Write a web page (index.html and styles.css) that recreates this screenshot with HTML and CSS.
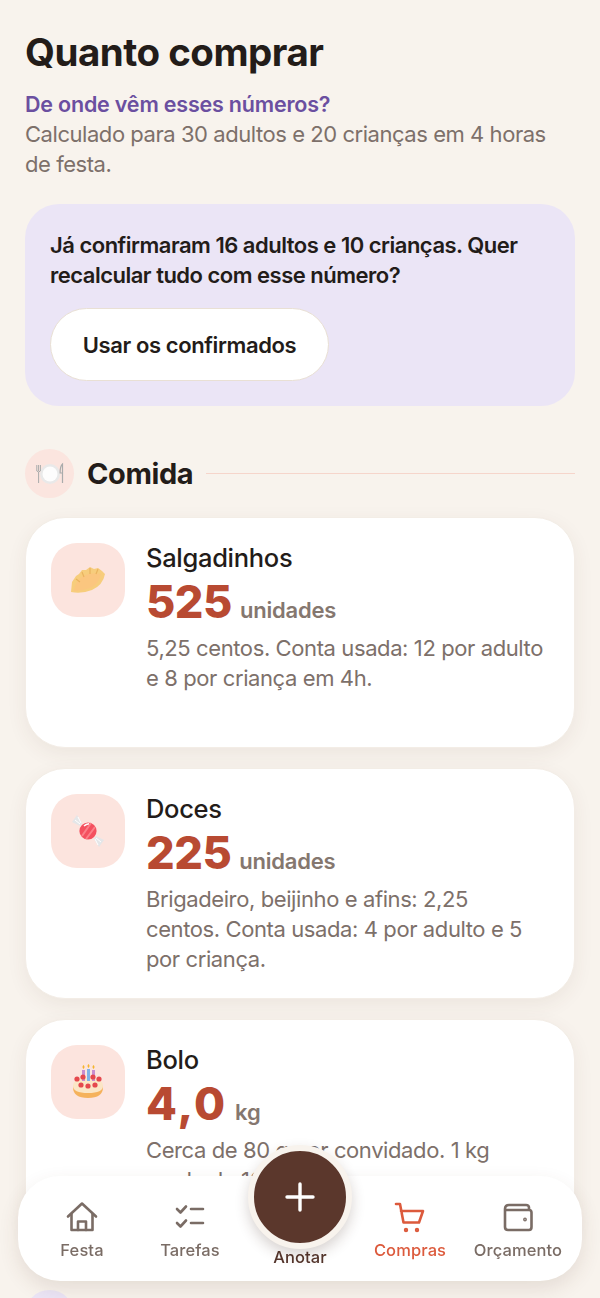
FILE: index.html
```html
<!DOCTYPE html>
<html lang="pt-BR">
<head>
  <meta charset="UTF-8">
  <meta name="viewport" content="width=device-width, initial-scale=1.0">
  <title>Quanto comprar</title>
  <link rel="stylesheet" href="styles.css">
</head>
<body>
  <main class="page">
    <h1>Quanto comprar</h1>
    <a class="source-link" href="#">De onde vêm esses números?</a>
    <p class="intro">Calculado para 30 adultos e 20 crianças em 4 horas<br>de festa.</p>

    <section class="notice">
      <p>Já confirmaram 16 adultos e 10 crianças. Quer recalcular tudo com esse número?</p>
      <button class="notice-btn">Usar os confirmados</button>
    </section>

    <div class="section-head">
      <span class="section-icon">
        <svg width="30" height="30" viewBox="0 0 30 30">
          <circle cx="15" cy="15" r="10" fill="#e9e9e9"/>
          <circle cx="15" cy="15" r="7.500" fill="#fdfdfd"/>
          <path d="M1.800 6v6M3.600 6v6M5.400 6v6M1.800 12q1.800 2 3.600 0M3.600 13v11" stroke="#a9abab" stroke-width="1" fill="none"/>
          <path d="M27.500 24V5q-2.400 2-2.400 9h2.400" stroke="#a9abab" stroke-width="1.200" fill="none"/>
        </svg>
      </span>
      <h2>Comida</h2>
      <span class="section-line"></span>
    </div>

    <article class="card card-tall">
      <span class="card-icon">
        <svg width="36" height="30" viewBox="0 0 36 30">
          <path d="M1 27 2 17 6 11 9 9 12 5 16 5 20 2 24 4 28 3 32 6 35 9Q33 20 22 25 12 29 1 27Z" fill="#f7cd7c"/>
          <path d="M4 26Q5 16 13 11 22 7 31 9 29 19 20 23 12 26 4 26Z" fill="#fbc67f"/>
          <path d="M6 14 10 17M12 7 14 12M20 3 20 9M28 4 26 9" stroke="#eab35f" stroke-width="1.200"/>
        </svg>
      </span>
      <div class="card-body">
        <h3>Salgadinhos</h3>
        <div class="amount"><strong>525</strong><span>unidades</span></div>
        <p>5,25 centos. Conta usada: 12 por adulto<br>e 8 por criança em 4h.</p>
      </div>
    </article>

    <article class="card">
      <span class="card-icon">
        <svg width="34" height="34" viewBox="0 0 34 34">
          <path d="M9 12 1 8 6 1 11 9ZM25 22 33 26 28 33 23 25Z" fill="#e4e6e8"/>
          <path d="M4 6 9 10M7 3 10 9M30 28 25 24M27 31 24 25" stroke="#fff" stroke-width="1"/>
          <circle cx="17" cy="17" r="8.600" fill="#f4505f"/>
          <path d="M11 22 20 9M15 25 24 13" stroke="#fb7f88" stroke-width="2"/>
          <path d="M13 12q2-2 5-2.300" stroke="#fff" stroke-width="1.400" fill="none"/>
        </svg>
      </span>
      <div class="card-body">
        <h3>Doces</h3>
        <div class="amount"><strong>225</strong><span>unidades</span></div>
        <p>Brigadeiro, beijinho e afins: 2,25<br>centos. Conta usada: 4 por adulto e 5<br>por criança.</p>
      </div>
    </article>

    <article class="card">
      <span class="card-icon">
        <svg width="32" height="36" viewBox="0 0 32 36">
          <path d="M1 23Q1 21 3 21H29Q31 21 31 23 31 34 16 34 1 34 1 23Z" fill="#f5b25c"/>
          <path d="M1 22Q1 14 16 14 31 14 31 22 31 29 16 29 1 29 1 22Z" fill="#fbe6c6"/>
          <path d="M10 6h3v11h-3zM20 6h3v11h-3z" fill="#c98ccf"/>
          <path d="M15 5h3v12h-3z" fill="#7fb3e8"/>
          <path d="M11.500 1q2 2 0 4-2-2 0-4ZM16.500 0q2 2 0 4-2-2 0-4ZM21.500 1q2 2 0 4-2-2 0-4Z" fill="#f5b52e"/>
          <circle cx="5" cy="15" r="2.600" fill="#e5484d"/>
          <circle cx="11" cy="13" r="2.600" fill="#e5484d"/>
          <circle cx="21" cy="13" r="2.600" fill="#e5484d"/>
          <circle cx="27" cy="15" r="2.600" fill="#e5484d"/>
          <circle cx="9" cy="21" r="2.600" fill="#e5484d"/>
          <circle cx="16" cy="22" r="2.600" fill="#e5484d"/>
          <circle cx="23" cy="21" r="2.600" fill="#e5484d"/>
        </svg>
      </span>
      <div class="card-body">
        <h3>Bolo</h3>
        <div class="amount amount-wide"><strong>4,0</strong><span>kg</span></div>
        <p>Cerca de 80 g por convidado. 1 kg<br>rende de 10 a 12 fatias.</p>
      </div>
    </article>

    <div class="section-head section-next">
      <span class="section-icon section-icon-lilac"></span>
    </div>
  </main>

  <nav class="tabbar">
    <a class="tab" href="#">
      <svg width="34" height="34" viewBox="0 0 34 34" fill="none" stroke="currentColor" stroke-width="2.600" stroke-linejoin="round" stroke-linecap="round">
        <path d="M3 16.500 17 3.500 31 16.500"/>
        <path d="M6.500 14V30H27.500V14"/>
        <path d="M13 30V21.500H21V30"/>
      </svg>
      <span>Festa</span>
    </a>
    <a class="tab" href="#">
      <svg width="34" height="34" viewBox="0 0 34 34" fill="none" stroke="currentColor" stroke-width="2.600" stroke-linejoin="round" stroke-linecap="round">
        <path d="M4 9 7.500 12.500 13 6.500M4 23 7.500 26.500 13 20.500"/>
        <path d="M18 9H30M18 23H30"/>
      </svg>
      <span>Tarefas</span>
    </a>
    <div class="tab tab-add">
      <button class="add-btn" aria-label="Anotar">
        <svg width="32" height="32" viewBox="0 0 32 32" fill="none" stroke="#fff" stroke-width="3.400" stroke-linecap="round">
          <path d="M16 3V29M3 16H29"/>
        </svg>
      </button>
      <span>Anotar</span>
    </div>
    <a class="tab tab-active" href="#">
      <svg width="34" height="34" viewBox="0 0 34 34" fill="none" stroke="currentColor" stroke-width="2.600" stroke-linejoin="round" stroke-linecap="round">
        <path d="M3 4H7L10.500 22.500H26L30 11H8"/>
        <circle cx="13" cy="30" r=".9" fill="currentColor"/>
        <circle cx="24" cy="30" r=".9" fill="currentColor"/>
      </svg>
      <span>Compras</span>
    </a>
    <a class="tab" href="#">
      <svg width="34" height="34" viewBox="0 0 34 34" fill="none" stroke="currentColor" stroke-width="2.600" stroke-linejoin="round" stroke-linecap="round">
        <path d="M28 10V7.500Q28 5 25 5H8Q4 5 4 9V27Q4 30 7 30H28Q30.500 30 30.500 27V12.500Q30.500 10 28 10H4.500"/>
        <circle cx="24" cy="19.500" r=".6" fill="currentColor"/>
      </svg>
      <span>Orçamento</span>
    </a>
  </nav>
</body>
</html>
```

FILE: styles.css
```css
* {
  box-sizing: border-box;
}

html, body {
  height: 1298px;
  overflow: hidden;
}

body {
  margin: 0;
  background-color: #f8f3ed;
  color: #231c19;
  font-family: Inter, "Noto Sans", sans-serif;
}

.page {
  padding: 29px 25px 0;
}

h1 {
  margin: 0 0 15px;
  font-size: 38.500px;
  line-height: 46px;
  font-weight: 700;
  letter-spacing: -0.5px;
}

.source-link {
  display: block;
  color: #6b4fa0;
  font-size: 21.500px;
  line-height: 29px;
  font-weight: 600;
  letter-spacing: -0.2px;
  text-decoration: none;
}

.intro {
  margin: 0;
  color: #7d706a;
  font-size: 22px;
  line-height: 30px;
  letter-spacing: -0.45px;
}

/* aviso dos confirmados */
.notice {
  margin-top: 25px;
  padding: 26px 25px 25px;
  background-color: #ebe5f6;
  border-radius: 34px;
}

.notice p {
  margin: 0 0 18px;
  font-size: 22px;
  line-height: 30px;
  font-weight: 600;
  letter-spacing: -0.5px;
}

.notice-btn {
  display: block;
  width: 279px;
  height: 73px;
  border: 1px solid #e9e0d4;
  border-radius: 37px;
  background-color: #fff;
  color: #231c19;
  font: 600 22px Inter, sans-serif;
  letter-spacing: -0.4px;
}

.section-head {
  display: flex;
  align-items: center;
  gap: 13px;
  margin: 43px 0 19px;
}

.section-icon {
  display: flex;
  align-items: center;
  justify-content: center;
  width: 49px;
  height: 49px;
  border-radius: 50%;
  background-color: #fbe5df;
}

.section-icon-lilac {
  background-color: #ebe5f6;
}

.section-head h2 {
  margin: 0;
  font-size: 29px;
  line-height: 36px;
  font-weight: 700;
  letter-spacing: -0.4px;
}

.section-line {
  flex: 1;
  height: 1px;
  background-color: #f6d5cb;
}

.section-next {
  margin-top: 40px;
}

/* cartões */
.card {
  display: flex;
  gap: 21px;
  height: 231px;
  margin-bottom: 20px;
  padding: 25px;
  background-color: #fff;
  border: 1px solid #f3ede6;
  border-radius: 40px;
  box-shadow: 0 6px 20px rgba(90, 60, 40, 0.07);
}

.card-icon {
  flex: none;
  display: flex;
  align-items: center;
  justify-content: center;
  width: 74px;
  height: 74px;
  border-radius: 26px;
  background-color: #fce4de;
}

.card-body {
  flex: 1;
}

.card h3 {
  margin: 0;
  font-size: 25.500px;
  line-height: 30px;
  font-weight: 500;
  letter-spacing: -0.3px;
}

.amount {
  display: flex;
  align-items: baseline;
  gap: 8px;
  margin-top: 1px;
  margin-bottom: 3px;
}

.amount strong {
  color: #b84a32;
  font-size: 45px;
  line-height: 56px;
  font-weight: 800;
  letter-spacing: -0.5px;
}

.amount-wide strong {
  letter-spacing: 2px;
}

.amount span {
  color: #85776f;
  font-size: 22px;
  font-weight: 600;
  letter-spacing: -0.2px;
}

.card p {
  margin: 0;
  color: #7d706a;
  font-size: 22px;
  line-height: 30px;
  letter-spacing: -0.4px;
}

/* barra de baixo */
.tabbar {
  position: fixed;
  left: 18px;
  right: 18px;
  top: 1176px;
  height: 105px;
  display: grid;
  grid-template-columns: 108px 108px 112px 108px 1fr;
  padding: 0 10px;
  background-color: #fff;
  border-radius: 42px;
  box-shadow: 0 8px 20px rgba(90, 60, 40, 0.12);
}

.tab {
  position: relative;
  display: flex;
  flex-direction: column;
  align-items: center;
  padding-top: 24px;
  color: #7a6c65;
  font-size: 16.500px;
  line-height: 22px;
  font-weight: 500;
  letter-spacing: 0.1px;
  text-decoration: none;
}

.tab svg {
  margin-bottom: 5px;
}

.tab-active {
  color: #dc5a3c;
}

.tab-add {
  color: #54352c;
  padding-top: 70px;
}

.add-btn {
  position: absolute;
  top: -31px;
  left: 50%;
  width: 104px;
  height: 104px;
  margin-left: -52px;
  display: flex;
  align-items: center;
  justify-content: center;
  background-color: #5b372c;
  border: 6px solid #f8f3ed;
  border-radius: 50%;
  box-shadow: 0 6px 14px rgba(60, 35, 25, 0.2);
}

.add-btn svg {
  margin: 0;
}
```
